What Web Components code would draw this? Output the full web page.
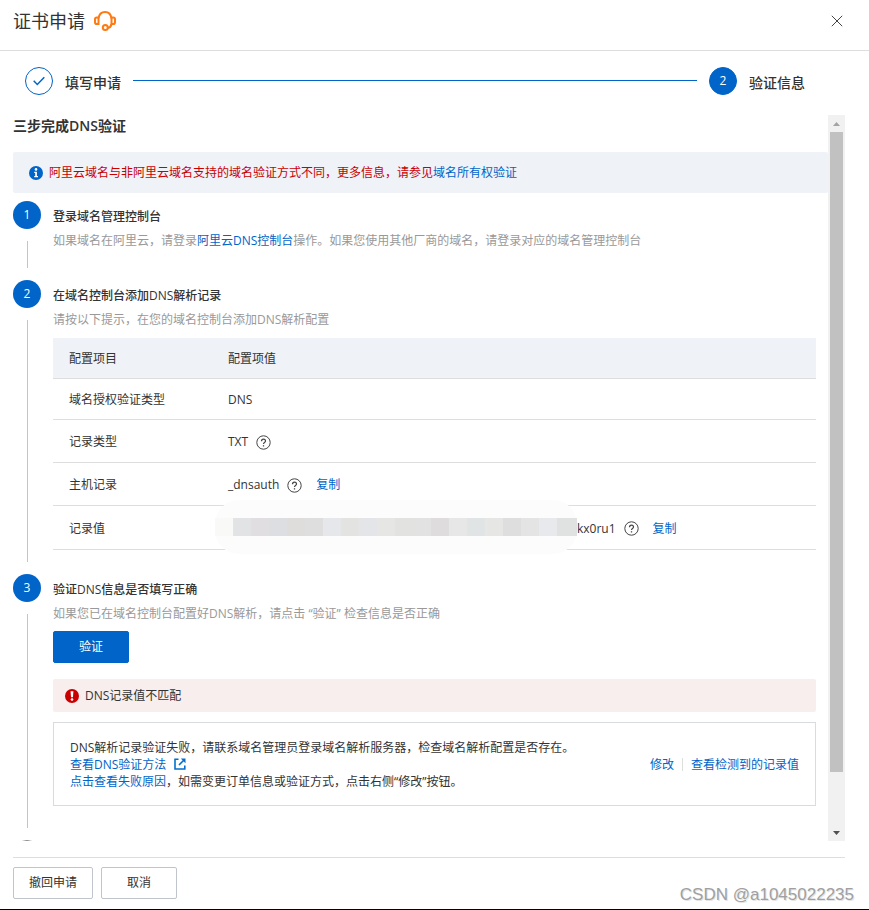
<!DOCTYPE html>
<html lang="zh-CN">
<head>
<meta charset="utf-8">
<title>证书申请</title>
<style>
  body {
    margin: 0;
    background: #fff;
    color: #333;
    font: 12px/18px "Open Sans", "Noto Sans CJK SC", sans-serif;
    --blue: #0064c8;
    --line: #dedede;
  }
</style>
</head>
<body>
<cert-dialog></cert-dialog>
<script>
const define = (name, html, setup) => {
  const template = document.createElement('template');
  template.innerHTML = '<style>*{box-sizing:border-box}a{color:var(--blue);text-decoration:none}svg{display:block;flex:none}</style>' + html;
  customElements.define(name, class extends HTMLElement {
    constructor() {
      super();
      this.attachShadow({ mode: 'open' }).append(template.content.cloneNode(true));
    }
    connectedCallback() { if (setup) setup(this, this.shadowRoot); }
  });
};

define('icon-headset', `
  <style>:host{display:block}</style>
  <svg width="22" height="20" viewBox="0 0 22 20" fill="none" stroke="#ff7a12" stroke-width="2">
    <path d="M4.500 6.500H2.800Q1 6.500 1 8.300v2.900Q1 13 2.800 13H4.500ZM17.500 6.500h1.700Q21 6.500 21 8.300v2.900Q21 13 19.200 13H17.500Z"/>
    <path d="M4.500 7.500C5 3.500 7.500 1 11 1s6 2.500 6.500 6.500M17.500 13c-.4 2.200-1.700 3.800-3.700 4"/>
    <circle cx="11.300" cy="16.500" r="2.500"/>
  </svg>`);

define('icon-help', `
  <style>:host{display:block}</style>
  <svg width="15" height="15" viewBox="0 0 15 15" fill="none" stroke="#444">
    <circle cx="7.500" cy="7.500" r="6.700"/>
    <path d="M5.500 6.200C5.500 3.300 9.500 3.500 9.500 6c0 1.500-2 1.600-2 3.100" stroke-width="1.200"/>
    <path d="M7.500 10.200v1.300" stroke-width="1.300"/>
  </svg>`);

define('icon-external', `
  <style>:host{display:block}</style>
  <svg width="12" height="12" viewBox="0 0 12 12" fill="none" stroke="#0070cc" stroke-width="1.600">
    <path d="M4.500 1.300H1V11h9.800V7.500M5 7l5.300-5.300"/>
    <path d="M6.800.5h4.700v4.700z" fill="#0070cc" stroke="none"/>
  </svg>`);

define('progress-node', `
  <style>
    :host{display:flex;align-items:center;gap:12px;font-size:14px;font-weight:500;line-height:22px}
    span{width:28px;height:28px;border-radius:50%;border:1px solid var(--blue);display:flex;align-items:center;justify-content:center;font-size:12px;font-weight:400}
    :host([current]) span{background:var(--blue);color:#fff}
    :host([current]) svg{display:none}
    label{padding-top:4px}
  </style>
  <span><svg width="12" height="10" viewBox="0 0 12 10" fill="none" stroke="#0064c8" stroke-width="1.500"><path d="M.7 4.800 4.300 8.500 11.300 1.200"/></svg></span>
  <label><slot></slot></label>`,
  (host, root) => { if (host.hasAttribute('current')) root.querySelector('span').append(host.getAttribute('current')); });

define('progress-bar', `
  <style>
    :host{display:flex;align-items:center;gap:12px;padding:16px 64px 20px 25px}
    i{flex:1;height:1px;margin-bottom:1px;background:var(--blue)}
  </style>
  <progress-node>填写申请</progress-node><i></i><progress-node current="2">验证信息</progress-node>`);

define('info-banner', `
  <style>
    :host{display:flex;align-items:center;gap:6px;padding:0 16px;min-height:41px;background:#eff2f7;border-radius:2px;color:#c80000}
  </style>
  <svg width="14" height="14" viewBox="0 0 14 14"><circle cx="7" cy="7" r="7" fill="#0064c8"/><circle cx="7" cy="3.400" r="1.300" fill="#fff"/><path d="M5.200 5.800h2.700v4.300H9v1.100H5.200v-1.100h1V6.900h-1z" fill="#fff"/></svg>
  <div><slot></slot></div>`);

define('guide-step', `
  <style>
    :host{display:grid;grid-template-columns:28px minmax(0,1fr);column-gap:12px;padding-right:12px}
    .rail{display:flex;flex-direction:column;align-items:center}
    .num{width:28px;height:28px;border-radius:50%;background:var(--blue);color:#fff;display:flex;align-items:center;justify-content:center}
    :host([pending]) .num{background:#fff;border:1px solid #888;color:#888}
    .rail i{flex:1;min-height:27px;width:1px;margin:12px 0;background:#c0c4cc}
    .body{padding:7px 0 var(--step-end,24px)}
    h3{margin:0 0 6px;font-size:12px;font-weight:500;line-height:18px}
    p{margin:0;color:#999}
  </style>
  <div class="rail"><span class="num"></span><i></i></div>
  <div class="body"><h3></h3><p><slot name="hint"></slot></p><slot></slot></div>`,
  (host, root) => {
    root.querySelector('.num').textContent = host.getAttribute('number');
    root.querySelector('h3').textContent = host.getAttribute('heading');
  });

define('masked-text', `
  <style>
    :host{position:relative;display:flex;margin:0 0 4px -13px;isolation:isolate}
    .haze{position:absolute;z-index:-1;inset:-18px 0;background:#fcfcfc;border-radius:24px}
    i{width:18px;height:18px}
    i:last-child{width:20px}
  </style>
  <div class="haze"></div>`,
  (host, root) => {
    for (const c of ['f9f9f7','e2e3e5','e0dee0','dcdee1','dedddc','dedede','e6e7ea','e3e3e1','e3e5e9','e6e6e4','e2e3e1','e1e2e1','dfdcde','e7e7e7','e1e4e4','e6e6e5','dedede','e4e4e5','e7e9ec','e0e1e1']) {
      const tile = document.createElement('i');
      tile.style.background = '#' + c;
      root.append(tile);
    }
  });

define('record-table', `
  <style>
    :host{display:block;margin-top:9px}
    table{width:100%;border-spacing:0;table-layout:fixed}
    th,td{height:41px;padding:2px 16px 0;text-align:left;font-weight:400;border-bottom:1px solid var(--line)}
    thead th{background:#eff2f7}
    th:first-child{width:159px}
    .tall>*{height:43px}
    .last>*{height:44px}
    div{display:flex;align-items:center}
    icon-help{margin:0 14px 0 8px}
  </style>
  <table>
    <thead><tr><th scope="col">配置项目</th><th scope="col">配置项值</th></tr></thead>
    <tbody>
      <tr><th scope="row">域名授权验证类型</th><td>DNS</td></tr>
      <tr class="tall"><th scope="row">记录类型</th><td><div>TXT<icon-help></icon-help></div></td></tr>
      <tr class="tall"><th scope="row">主机记录</th><td><div>_dnsauth<icon-help></icon-help><a href="#">复制</a></div></td></tr>
      <tr class="last"><th scope="row">记录值</th><td><div><masked-text></masked-text>kx0ru1<icon-help></icon-help><a href="#">复制</a></div></td></tr>
    </tbody>
  </table>`);

define('ui-button', `
  <style>
    :host{display:block}
    button{font:inherit;height:32px;min-width:76px;padding:0 15px;border:1px solid #c0c4cc;border-radius:2px;background:#fff;color:#333}
    :host([primary]) button{background:var(--blue);border-color:var(--blue);color:#fff}
  </style>
  <button type="button"><slot></slot></button>`);

define('error-alert', `
  <style>
    :host{display:flex;align-items:center;gap:6px;min-height:33px;padding:0 12px;background:#f8eeed;border-radius:2px}
  </style>
  <svg width="14" height="14" viewBox="0 0 14 14"><circle cx="7" cy="7" r="7" fill="#c80000"/><path d="M5.600 2.300h2.800L8 8.300H6z" fill="#fff"/><circle cx="7" cy="10.500" r="1.300" fill="#fff"/></svg>
  <div><slot></slot></div>`);

define('result-box', `
  <style>
    :host{display:flex;align-items:center;justify-content:space-between;min-height:84px;padding:0 16px;border:1px solid #d9dbde;line-height:17px}
    .row,.actions{display:flex;align-items:center}
    .row{gap:8px}
    .actions{gap:8px;flex:none}
    .actions i{width:1px;height:13px;background:var(--line)}
  </style>
  <div>
    <div>DNS解析记录验证失败，请联系域名管理员登录域名解析服务器，检查域名解析配置是否存在。</div>
    <div class="row"><a href="#">查看DNS验证方法</a><icon-external></icon-external></div>
    <div><a href="#">点击查看失败原因</a>，如需变更订单信息或验证方式，点击右侧“修改”按钮。</div>
  </div>
  <div class="actions"><a href="#">修改</a><i></i><a href="#">查看检测到的记录值</a></div>`);

define('scroll-rail', `
  <style>
    :host{display:flex;flex-direction:column;flex:none;width:17px;background:#f1f1f1}
    .cap{height:17px;display:flex;align-items:center;justify-content:center}
    .track{flex:1;padding:0 2px}
    .thumb{height:92.5%;background:#c1c1c1}
  </style>
  <div class="cap"><svg width="7" height="4" viewBox="0 0 7 4"><path d="M0 4 3.500 0 7 4z" fill="#a3a3a3"/></svg></div>
  <div class="track"><div class="thumb"></div></div>
  <div class="cap"><svg width="7" height="4" viewBox="0 0 7 4"><path d="M0 0 3.500 4 7 0z" fill="#505050"/></svg></div>`);

define('cert-dialog', `
  <style>
    :host{position:relative;display:flex;flex-direction:column;height:100vh;box-sizing:border-box;border-bottom:1px solid #000;overflow:hidden}
    header{display:flex;align-items:center;gap:9px;min-height:51px;padding:0 26px 8px 13px;border-bottom:1px solid var(--line)}
    h1{margin:0;font-size:18px;line-height:26px;font-weight:400}
    .close{margin-left:auto;padding:0;border:0;background:none}
    .view{flex:1;min-height:0;display:flex;margin:0 24px 0 13px}
    .content{flex:1;min-width:0;overflow:hidden}
    h2{margin:0 0 15px;font-size:14px;line-height:22px;font-weight:600}
    info-banner{margin-bottom:8px}
    .verify{--step-end:34px}
    .verify ui-button{margin:8px 0 16px}
    error-alert{margin-bottom:10px}
    footer{display:flex;gap:8px;margin:16px 24px 0 13px;padding:9px 0 10px;border-top:1px solid var(--line)}
    .mark{position:absolute;right:15px;bottom:3px;font:17px/22px "Liberation Sans",sans-serif;color:#a0a0a0;text-shadow:1px 1px 0 #e4e4e4}
  </style>
  <header>
    <h1>证书申请</h1><icon-headset></icon-headset>
    <button class="close" type="button" aria-label="关闭"><svg width="12" height="12" viewBox="0 0 12 12" stroke="#444"><path d="M.8.8 11.200 11.200M11.200.8.8 11.200"/></svg></button>
  </header>
  <progress-bar></progress-bar>
  <div class="view">
    <div class="content">
      <h2>三步完成DNS验证</h2>
      <info-banner>阿里云域名与非阿里云域名支持的域名验证方式不同，更多信息，请参见<a href="#">域名所有权验证</a></info-banner>
      <guide-step number="1" heading="登录域名管理控制台"><span slot="hint">如果域名在阿里云，请登录<a href="#">阿里云DNS控制台</a>操作。如果您使用其他厂商的域名，请登录对应的域名管理控制台</span></guide-step>
      <guide-step number="2" heading="在域名控制台添加DNS解析记录"><span slot="hint">请按以下提示，在您的域名控制台添加DNS解析配置</span><record-table></record-table></guide-step>
      <guide-step class="verify" number="3" heading="验证DNS信息是否填写正确"><span slot="hint">如果您已在域名控制台配置好DNS解析，请点击 “验证” 检查信息是否正确</span>
        <ui-button primary>验证</ui-button>
        <error-alert>DNS记录值不匹配</error-alert>
        <result-box></result-box>
      </guide-step>
      <guide-step pending number="" heading=""></guide-step>
    </div>
    <scroll-rail></scroll-rail>
  </div>
  <footer><ui-button>撤回申请</ui-button><ui-button>取消</ui-button></footer>
  <div class="mark">CSDN @a1045022235</div>`);
</script>
</body>
</html>
